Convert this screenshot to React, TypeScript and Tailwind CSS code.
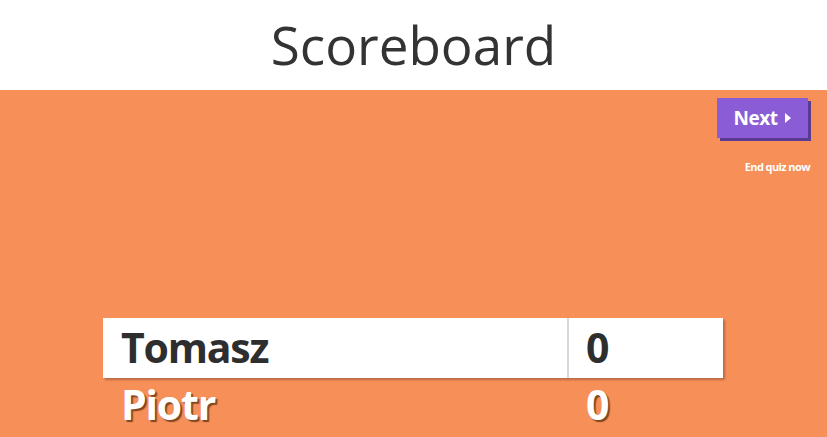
import React from "react";

const players = [
  { name: "Tomasz", score: 0, highlight: true },
  { name: "Piotr", score: 0, highlight: false },
];

export default function App() {
  return (
    <div className="w-[827px] h-[437px] overflow-hidden bg-white" style={{ fontFamily: '"Open Sans", sans-serif' }}>
      <div className="h-[90px] flex items-center justify-center">
        <h1 className="text-[53px] font-normal text-[#333] leading-none pb-[2px]">Scoreboard</h1>
      </div>
      <div className="h-[347px] bg-[#f68f58] flex flex-col">
        <div className="flex flex-col items-end pr-[19px] pt-[8px]">
          <button className="w-[91px] h-[40px] bg-[#8a5cd6] text-white font-bold text-[19px] flex items-center justify-center gap-[8px] shadow-[3px_3px_0_#5b3a91] tracking-[-0.5px]">
            Next
            <svg width="6" height="10" viewBox="0 0 6 10"><path d="M0 0 L6 5 L0 10 Z" fill="white" /></svg>
          </button>
          <div className="mt-[21px] mr-[-2px] text-white font-bold text-[11px] tracking-[-0.6px]">End quiz now</div>
        </div>
        <div className="mt-[142px] ml-[103px] w-[620px] flex flex-col">
          {players.map((p) => (
            <div
              key={p.name}
              className={
                p.highlight
                  ? "h-[60px] flex bg-white shadow-[2px_2px_2px_rgba(0,0,0,0.25)]"
                  : "h-[55px] flex"
              }
            >
              <div
                className={
                  p.highlight
                    ? "w-[466px] border-r-2 border-[#d8d8d8] flex items-center pl-[18px] text-[41px] font-bold text-[#2e2e2e] tracking-[-1.2px]"
                    : "w-[466px] border-r-2 border-transparent flex items-center pl-[18px] text-[41px] font-bold text-white tracking-[-1.2px] [text-shadow:2px_2px_1px_rgba(90,45,15,0.75)]"
                }
              >
                {p.name}
              </div>
              <div
                className={
                  p.highlight
                    ? "flex-1 flex items-center pl-[17px] text-[41px] font-bold text-[#2e2e2e]"
                    : "flex-1 flex items-center pl-[17px] text-[41px] font-bold text-white [text-shadow:2px_2px_1px_rgba(90,45,15,0.75)]"
                }
              >
                {p.score}
              </div>
            </div>
          ))}
        </div>
      </div>
    </div>
  );
}
